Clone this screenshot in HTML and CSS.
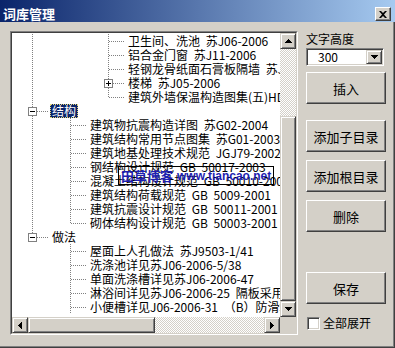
FILE: index.html
```html
<!DOCTYPE html>
<html lang="zh-CN">
<head>
  <meta charset="UTF-8">
  <title>词库管理</title>
  <link rel="stylesheet" href="styles.css">
</head>
<body>
  <div class="window">
    <div class="titlebar">
      <span class="title">词库管理</span>
      <button class="close">
        <svg width="8" height="7" viewBox="0 0 8 7"><path d="M0 0h2l2 2 2-2h2L5 3.5 8 7H6L4 5 2 7H0l3-3.5z"/></svg>
      </button>
    </div>

    <div class="content">
      <div class="tree">
        <div class="tree-frame">
          <div class="tree-view">
            <div class="node"><i class="c pipe"></i><i class="c"></i><i class="c tee"></i><span class="label">卫生间、洗池 苏J06-2006</span></div>
            <div class="node"><i class="c pipe"></i><i class="c"></i><i class="c tee"></i><span class="label">铝合金门窗 苏J11-2006</span></div>
            <div class="node"><i class="c pipe"></i><i class="c"></i><i class="c tee"></i><span class="label">轻钢龙骨纸面石膏板隔墙 苏J03-2006</span></div>
            <div class="node"><i class="c pipe"></i><i class="c"></i><i class="c tee box"><svg width="9" height="9"><rect x=".5" y=".5" width="8" height="8" fill="#fff" stroke="#808080"/><path d="M2 4h5v1H2zM4 2h1v5H4z"/></svg></i><span class="label">楼梯 苏J05-2006</span></div>
            <div class="node"><i class="c pipe"></i><i class="c"></i><i class="c ell"></i><span class="label">建筑外墙保温构造图集(五)HD-2006</span></div>

            <div class="node"><i class="c tee box"><svg width="9" height="9"><rect x=".5" y=".5" width="8" height="8" fill="#fff" stroke="#808080"/><path d="M2 4h5v1H2z"/></svg></i><span class="label sel">结构</span></div>
            <div class="node"><i class="c pipe"></i><i class="c tee"></i><span class="label">建筑物抗震构造详图 苏G02-2004</span></div>
            <div class="node"><i class="c pipe"></i><i class="c tee"></i><span class="label">建筑结构常用节点图集 苏G01-2003</span></div>
            <div class="node"><i class="c pipe"></i><i class="c tee"></i><span class="label">建筑地基处理技术规范 JGJ79-2002</span></div>
            <div class="node"><i class="c pipe"></i><i class="c tee"></i><span class="label">钢结构设计规范 GB 50017-2003</span></div>
            <div class="node"><i class="c pipe"></i><i class="c tee"></i><span class="label">混凝土结构设计规范 GB 50010-2002</span></div>
            <div class="node"><i class="c pipe"></i><i class="c tee"></i><span class="label">建筑结构荷载规范 GB 5009-2001</span></div>
            <div class="node"><i class="c pipe"></i><i class="c tee"></i><span class="label">建筑抗震设计规范 GB 50011-2001</span></div>
            <div class="node"><i class="c pipe"></i><i class="c ell"></i><span class="label">砌体结构设计规范 GB 50003-2001</span></div>

            <div class="node"><i class="c ell box"><svg width="9" height="9"><rect x=".5" y=".5" width="8" height="8" fill="#fff" stroke="#808080"/><path d="M2 4h5v1H2z"/></svg></i><span class="label">做法</span></div>
            <div class="node"><i class="c"></i><i class="c tee"></i><span class="label">屋面上人孔做法 苏J9503-1/41</span></div>
            <div class="node"><i class="c"></i><i class="c tee"></i><span class="label">洗涤池详见苏J06-2006-5/38</span></div>
            <div class="node"><i class="c"></i><i class="c tee"></i><span class="label">单面洗涤槽详见苏J06-2006-47</span></div>
            <div class="node"><i class="c"></i><i class="c tee"></i><span class="label">淋浴间详见苏J06-2006-25 隔板采用成品</span></div>
            <div class="node"><i class="c"></i><i class="c tee"></i><span class="label">小便槽详见J06-2006-31 （B）防滑地砖</span></div>
          </div>

          <div class="vscroll">
            <div class="sbtn"><svg width="7" height="4"><path d="M3 0h1v1h1v1h1v1h1v1H0V3h1V2h1V1h1z"/></svg></div>
            <div class="track vtrack"></div>
            <div class="thumb"></div>
            <div class="sbtn"><svg width="7" height="4"><path d="M0 0h7v1H6v1H5v1H4v1H3V3H2V2H1V1H0z"/></svg></div>
          </div>
          <div class="hscroll">
            <div class="sbtn"><svg width="4" height="7"><path d="M3 0h1v7H3V6H2V5H1V4H0V3h1V2h1V1h1z"/></svg></div>
            <div class="thumb hthumb"></div>
            <div class="track"></div>
            <div class="sbtn"><svg width="4" height="7"><path d="M0 0h1v1h1v1h1v1h1v1H3v1H2v1H1v1H0z"/></svg></div>
          </div>
          <div class="corner"></div>

          <div class="watermark"><span class="wm-cn">田草博客</span><span class="wm-en">www.tiancao.net</span></div>
        </div>
      </div>

      <div class="side">
        <div class="side-label">文字高度</div>
        <div class="combo">
          <span class="combo-value">300</span>
          <span class="combo-btn"><svg width="7" height="4"><path d="M0 0h7v1H6v1H5v1H4v1H3V3H2V2H1V1H0z"/></svg></span>
        </div>
        <button class="btn btn-insert">插入</button>
        <button class="btn btn-child">添加子目录</button>
        <button class="btn btn-gap">添加根目录</button>
        <button class="btn btn-gap">删除</button>
        <button class="btn btn-save">保存</button>
        <label class="check">
          <span class="check-box"></span>
          <span class="check-text">全部展开</span>
        </label>
      </div>
    </div>
  </div>
</body>
</html>
```

FILE: styles.css
```css
body {
  margin: 0;
  overflow: hidden;
  font-family: "Noto Sans CJK SC", sans-serif;
  font-size: 12px;
  color: #000;
}
.window {
  width: 395px;
  height: 348px;
  background-color: #d4d0c8;
  box-shadow: inset -1px -1px #404040, inset -2px -2px #808080;
  display: flex;
  flex-direction: column;
}

/* title bar */
.titlebar {
  height: 22px;
  box-sizing: border-box;
  padding: 6px 4px 0 3px;
  display: flex;
  align-items: center;
  justify-content: space-between;
  background: linear-gradient(to right, #0a246a, #a6caf0);
}
.title {
  color: #fff;
  font-weight: bold;
  font-size: 13px;
  line-height: 16px;
}
.close {
  width: 16px;
  height: 14px;
  padding: 0;
  display: flex;
  align-items: center;
  justify-content: center;
  background-color: #d4d0c8;
  border: 1px solid;
  border-color: #fff #404040 #404040 #fff;
  box-shadow: inset -1px -1px #808080;
}

.content {
  display: flex;
  padding: 9px 0 0 10px;
}

/* tree view */
.tree {
  width: 288px;
  height: 304px;
  box-sizing: border-box;
  border: 1px solid;
  border-color: #808080 #fff #fff #808080;
}
.tree-frame {
  position: relative;
  height: 100%;
  box-sizing: border-box;
  border: 1px solid;
  border-color: #404040 #d4d0c8 #d4d0c8 #404040;
  background-color: #fff;
  display: grid;
  grid-template-columns: 268px 16px;
  grid-template-rows: 284px 16px;
}
.tree-view {
  overflow: hidden;
  padding-top: 1px;
  --dotv: repeating-linear-gradient(to bottom, #808080 0 1px, transparent 1px 2px);
  --doth: repeating-linear-gradient(to right, #808080 0 1px, transparent 1px 2px);
}
.node {
  display: flex;
  height: 14px;
  white-space: nowrap;
}
.c {
  flex: none;
  width: 38px;
  height: 14px;
}
.pipe {
  background: var(--dotv) 20px 0 / 1px 14px no-repeat;
}
.tee {
  background: var(--doth) 21px 7px / 16px 1px no-repeat, var(--dotv) 20px 0 / 1px 14px no-repeat;
}
.ell {
  background: var(--doth) 21px 7px / 16px 1px no-repeat, var(--dotv) 20px 0 / 1px 8px no-repeat;
}
.box {
  display: flex;
  align-items: center;
  box-sizing: border-box;
  padding-left: 16px;
}
.box svg {
  display: block;
}
.label {
  padding: 0 2px;
  height: 14px;
  line-height: 14px;
  box-sizing: border-box;
  word-spacing: 3px;
}
.label.sel {
  background-color: #0a246a;
  color: #fff;
  outline: 1px dotted #e6d77a;
  outline-offset: -1px;
}

/* scroll bars */
.vscroll {
  display: flex;
  flex-direction: column;
}
.hscroll {
  display: flex;
}
.sbtn,
.thumb {
  flex: none;
  box-sizing: border-box;
  background-color: #d4d0c8;
  border: 1px solid;
  border-color: #d4d0c8 #404040 #404040 #d4d0c8;
  box-shadow: inset 1px 1px #fff, inset -1px -1px #808080;
}
.sbtn {
  width: 16px;
  height: 16px;
  display: flex;
  align-items: center;
  justify-content: center;
}
.thumb {
  flex: 1;
}
.hthumb {
  flex: none;
  width: 127px;
}
.track {
  flex: 1;
  background: repeating-conic-gradient(#fff 0 25%, #d4d0c8 0 50%) 0 0 / 2px 2px;
}
.vtrack {
  flex: none;
  height: 67px;
}
.corner {
  background-color: #d4d0c8;
}

.watermark {
  position: absolute;
  left: 106px;
  top: 133px;
  width: 156px;
  height: 19px;
  box-sizing: border-box;
  border: 1px solid #000;
  padding-left: 2px;
  display: flex;
  align-items: center;
  gap: 4px;
  color: #1e1eb0;
  font-weight: bold;
  white-space: nowrap;
}
.wm-cn {
  font-size: 13px;
}
.wm-en {
  font-family: "Liberation Sans", sans-serif;
  font-size: 12px;
}

/* right column */
.side {
  width: 80px;
  margin-left: 8px;
  display: flex;
  flex-direction: column;
}
.side-label {
  margin-top: 1px;
  line-height: 14px;
}
.combo {
  margin-top: 2px;
  width: 78px;
  height: 18px;
  box-sizing: border-box;
  padding: 1px;
  display: flex;
  align-items: center;
  background-color: #fff;
  border: 1px solid;
  border-color: #808080 #fff #fff #808080;
  box-shadow: inset 1px 1px #404040, inset -1px -1px #d4d0c8;
}
.combo-value {
  flex: 1;
  padding-left: 10px;
  line-height: 14px;
}
.combo-btn {
  width: 16px;
  height: 14px;
  box-sizing: border-box;
  display: flex;
  align-items: center;
  justify-content: center;
  background-color: #d4d0c8;
  border: 1px solid;
  border-color: #d4d0c8 #404040 #404040 #d4d0c8;
  box-shadow: inset 1px 1px #fff, inset -1px -1px #808080;
}
.btn {
  width: 80px;
  height: 32px;
  padding: 0;
  font-family: "Noto Sans CJK SC", sans-serif;
  font-size: 13px;
  color: #000;
  background-color: #d4d0c8;
  border: 1px solid;
  border-color: #fff #404040 #404040 #fff;
  box-shadow: inset -1px -1px #808080;
}
.btn-insert {
  margin-top: 6px;
}
.btn-child {
  margin-top: 16px;
}
.btn-gap {
  margin-top: 8px;
}
.btn-save {
  margin-top: 40px;
}
.check {
  margin-top: 12px;
  height: 14px;
  display: flex;
  align-items: center;
}
.check-box {
  width: 13px;
  height: 13px;
  margin-left: 1px;
  box-sizing: border-box;
  background-color: #fff;
  border: 1px solid;
  border-color: #808080 #fff #fff #808080;
  box-shadow: inset 1px 1px #404040, inset -1px -1px #d4d0c8;
}
.check-text {
  margin-left: 3px;
  line-height: 14px;
}
```
